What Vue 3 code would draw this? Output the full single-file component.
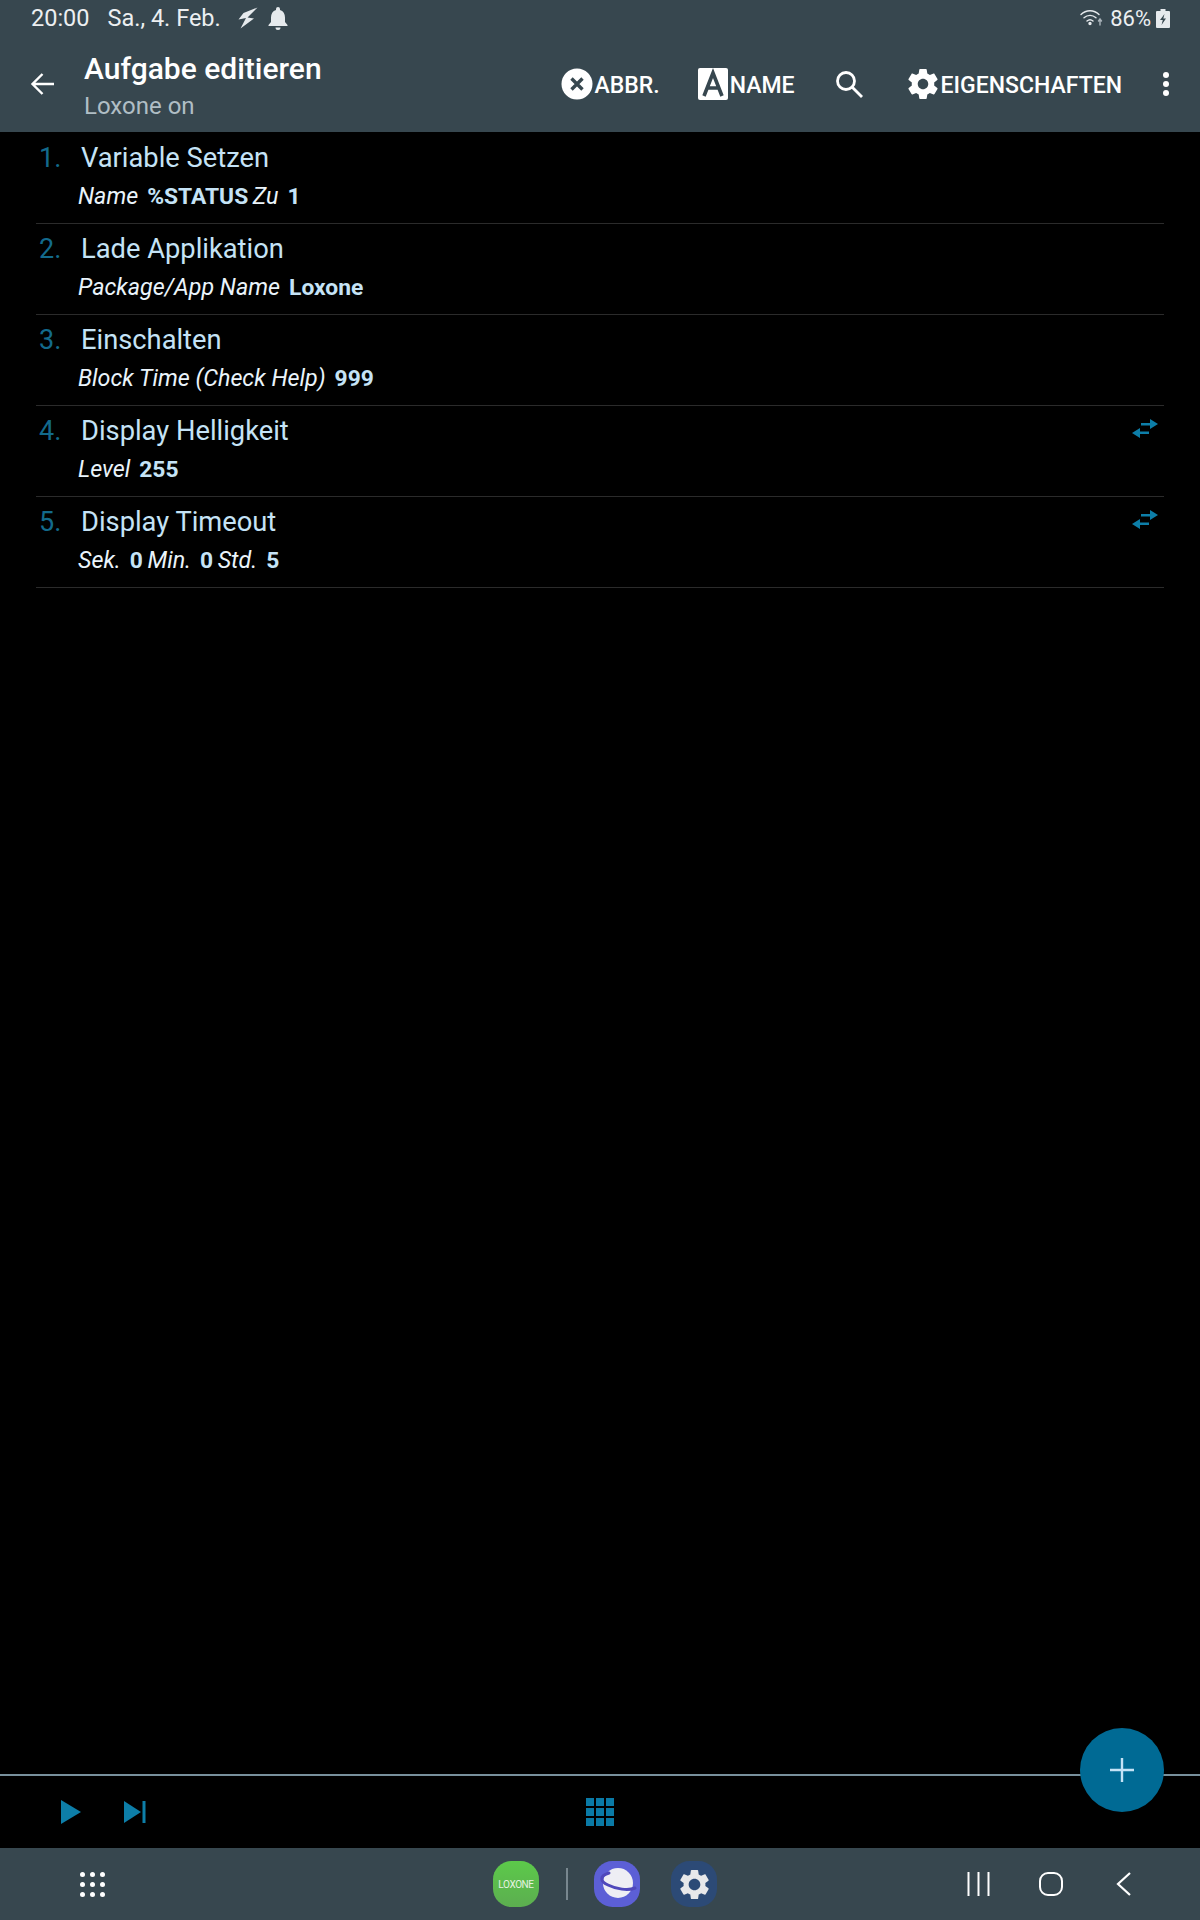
<template>
  <div class="screen">
    <div class="top">
      <div class="status">
        <span class="clock">20:00</span>
        <span class="date">Sa., 4. Feb.</span>
        <svg class="st-flash" width="20" height="22" viewBox="0 0 20 22"><path d="M19.500 .5 L5.500 6 L.5 12.500 L8 11 L2.500 21.500 L16 11.500 L9.500 10.500 Z" fill="#e6eaed"/></svg>
        <svg class="st-bell" width="20" height="24" viewBox="0 0 20 24"><path d="M10 1a2 2 0 0 1 2 2v1c3.4 1 5 4 5 7.500V16l2.500 3v1H.5v-1L3 16v-4.500C3 8 4.600 5 8 4V3a2 2 0 0 1 2-2zM7.500 21.500h5a2.500 2.500 0 0 1-5 0z" fill="#e6eaed"/></svg>
        <div class="status-right">
          <svg width="24" height="20" viewBox="0 0 24 20" fill="none" stroke="#e6eaed" stroke-width="1.400" stroke-linecap="round">
            <path d="M1 6.500C6 1.500 14 1.500 19 6.500"/>
            <path d="M4 9.800C7.500 6.500 12.500 6.500 16 9.800"/>
            <path d="M7 13C8.800 11.400 11.200 11.400 13 13"/>
            <circle cx="10" cy="15.500" r="1" fill="#e6eaed"/>
            <path d="M20 11v6M18.500 13l1.500-2 1.500 2" stroke="#a9b3ba"/>
          </svg>
          <span class="batt-text">86%</span>
          <svg width="14" height="19" viewBox="0 0 14 19"><path d="M4.500 0h5v2h3.500a1 1 0 0 1 1 1v15a1 1 0 0 1-1 1H1a1 1 0 0 1-1-1V3a1 1 0 0 1 1-1h3.500z" fill="#e6eaed"/><path d="M8.500 5 L4 11 L6.800 11 L5.500 16 L10 9.500 L7.300 9.500 Z" fill="#37474f"/></svg>
        </div>
      </div>
      <div class="toolbar">
        <svg class="back" width="24" height="24" viewBox="0 0 24 24" fill="none" stroke="#fff" stroke-width="2.400"><path d="M24 12H2.500M12.500 2 2.500 12l10 10"/></svg>
        <div class="titles">
          <div class="title">Aufgabe editieren</div>
          <div class="subtitle">Loxone on</div>
        </div>
        <div class="actions">
          <div class="act abbr">
            <svg width="32" height="32" viewBox="0 0 32 32"><circle cx="16" cy="16" r="15.500" fill="#fff"/><path d="M10.500 10.500l11 11M21.500 10.500l-11 11" stroke="#37474f" stroke-width="3.400"/></svg>
            <span>ABBR.</span>
          </div>
          <div class="act name">
            <svg width="30" height="32" viewBox="0 0 30 32"><rect width="30" height="32" rx="2" fill="#fff"/><path d="M6 28 15 5l9 23M9 20h12" fill="none" stroke="#37474f" stroke-width="3.600"/></svg>
            <span>NAME</span>
          </div>
          <svg class="search" width="28" height="28" viewBox="0 0 28 28" fill="none" stroke="#fff" stroke-width="2.800"><circle cx="11" cy="11" r="8.500"/><path d="M17 17l10 10"/></svg>
          <div class="act props">
            <svg class="gear" width="36" height="36" viewBox="0 0 24 24"><path fill="#fff" d="M19.430 12.980c.04-.32.07-.64.07-.98s-.03-.66-.07-.98l2.110-1.650c.19-.15.240-.42.120-.64l-2-3.460c-.12-.22-.39-.3-.61-.22l-2.490 1c-.52-.4-1.080-.73-1.690-.98l-.38-2.650C14.460 2.180 14.250 2 14 2h-4c-.25 0-.46.18-.49.420l-.38 2.650c-.61.25-1.170.59-1.690.98l-2.490-1c-.23-.09-.49 0-.61.220l-2 3.460c-.13.220-.07.490.12.640l2.110 1.650c-.04.32-.07.65-.07.980s.03.660.07.980l-2.110 1.650c-.19.150-.24.420-.12.640l2 3.460c.12.220.39.300.61.220l2.490-1c.52.400 1.080.730 1.690.980l.38 2.650c.03.240.24.420.49.420h4c.25 0 .46-.18.49-.42l.38-2.650c.61-.25 1.170-.59 1.690-.98l2.490 1c.23.090.49 0 .61-.22l2-3.460c.12-.22.07-.49-.12-.64l-2.110-1.650zM12 15.500c-1.930 0-3.500-1.570-3.500-3.500s1.570-3.500 3.500-3.500 3.500 1.570 3.500 3.500-1.570 3.500-3.500 3.500z"/></svg>
            <span>EIGENSCHAFTEN</span>
          </div>
          <svg class="more" width="8" height="26" viewBox="0 0 8 26" fill="#fff"><circle cx="4" cy="4" r="3"/><circle cx="4" cy="13" r="3"/><circle cx="4" cy="22" r="3"/></svg>
        </div>
      </div>
    </div>

    <div class="list">
      <div v-for="(item, i) in items" :key="item.title" class="row">
        <div class="row-head">
          <span class="num">{{ i + 1 }}.</span>
          <span class="row-title">{{ item.title }}</span>
          <svg v-if="item.swap" class="swap" width="26" height="19" viewBox="0 0 26 19" fill="#0d7ea8">
            <path d="M9 4h9V0l8 5-8 5V6.500H9z"/>
            <path d="M17 12.500H8V9l-8 5 8 5v-4h9z"/>
          </svg>
        </div>
        <div class="params">
          <template v-for="p in item.params" :key="p.label">
            <i>{{ p.label }}</i><b>{{ p.value }}</b>
          </template>
        </div>
      </div>
    </div>

    <div class="bottom">
      <svg width="20" height="24" viewBox="0 0 20 24" class="play"><path d="M0 0l20 12L0 24z" fill="#0d7ea8"/></svg>
      <svg width="22" height="22" viewBox="0 0 22 22" class="skip"><path d="M0 0l17 11L0 22z" fill="#0d7ea8"/><rect x="18.500" width="3" height="22" fill="#0d7ea8"/></svg>
      <div class="grid-icon"><span v-for="n in 9" :key="n"></span></div>
    </div>

    <div class="fab">
      <svg width="26" height="26" viewBox="0 0 26 26" stroke="#c5e3f6" stroke-width="2.400"><path d="M13 1v24M1 13h24"/></svg>
    </div>

    <div class="nav">
      <div class="apps-dots"><span v-for="n in 9" :key="n"></span></div>
      <div class="dock">
        <div class="squircle loxone"><span>LOXONE</span></div>
        <div class="dock-sep"></div>
        <div class="squircle planet">
          <svg width="46" height="46" viewBox="0 0 46 46">
            <circle cx="24" cy="22" r="15" fill="#eeeef4"/>
            <path d="M15 12C5 15 6 20 14 24 22 28 34 30 41 27" fill="none" stroke="#4f48bb" stroke-width="3" stroke-linecap="round"/>
          </svg>
        </div>
        <div class="squircle settings">
          <svg width="35" height="35" viewBox="0 0 24 24"><path fill="#e8e8ea" d="M19.430 12.980c.04-.32.07-.64.07-.98s-.03-.66-.07-.98l2.110-1.650c.19-.15.240-.42.120-.64l-2-3.460c-.12-.22-.39-.3-.61-.22l-2.490 1c-.52-.4-1.080-.73-1.690-.98l-.38-2.650C14.460 2.180 14.250 2 14 2h-4c-.25 0-.46.18-.49.420l-.38 2.650c-.61.25-1.170.59-1.690.98l-2.490-1c-.23-.09-.49 0-.61.220l-2 3.460c-.13.220-.07.490.12.640l2.110 1.650c-.04.32-.07.65-.07.980s.03.660.07.980l-2.110 1.650c-.19.150-.24.420-.12.640l2 3.460c.12.220.39.300.61.220l2.490-1c.52.400 1.080.730 1.690.980l.38 2.650c.03.240.24.420.49.420h4c.25 0 .46-.18.49-.42l.38-2.650c.61-.25 1.170-.59 1.690-.98l2.490 1c.23.090.49 0 .61-.22l2-3.460c.12-.22.07-.49-.12-.64l-2.110-1.650zM12 16c-2.200 0-4-1.800-4-4s1.800-4 4-4 4 1.800 4 4-1.800 4-4 4z"/></svg>
        </div>
      </div>
      <div class="sys-keys">
        <svg width="23" height="24" viewBox="0 0 23 24" stroke="#fff" stroke-width="2"><path d="M1.500 0v24M11.500 0v24M21.500 0v24"/></svg>
        <svg class="key-home" width="24" height="24" viewBox="0 0 24 24" fill="none" stroke="#fff" stroke-width="2"><rect x="1" y="1" width="22" height="22" rx="8"/></svg>
        <svg class="key-back" width="15" height="24" viewBox="0 0 15 24" fill="none" stroke="#fff" stroke-width="2.200"><path d="M14 1 2 12l12 11"/></svg>
      </div>
    </div>
  </div>
</template>

<script setup>
const items = [
  { title: 'Variable Setzen', params: [{ label: 'Name', value: '%STATUS' }, { label: 'Zu', value: '1' }] },
  { title: 'Lade Applikation', params: [{ label: 'Package/App Name', value: 'Loxone' }] },
  { title: 'Einschalten', params: [{ label: 'Block Time (Check Help)', value: '999' }] },
  { title: 'Display Helligkeit', swap: true, params: [{ label: 'Level', value: '255' }] },
  { title: 'Display Timeout', swap: true, params: [{ label: 'Sek.', value: '0' }, { label: 'Min.', value: '0' }, { label: 'Std.', value: '5' }] }
]
</script>

<style>
html, body { margin: 0; background: #000; }
</style>

<style scoped>
.screen { position: relative; width: 1200px; height: 1920px; background: #000; display: flex; flex-direction: column; font-family: Roboto, "Liberation Sans", sans-serif; overflow: hidden; }
.top { background: #37474f; height: 132px; flex: none; }
.status { height: 36px; display: flex; align-items: center; padding: 0 30px 0 31px; color: #eceff1; font-size: 23.500px; }
.date { margin-left: 18px; }
.st-flash { margin-left: 17px; }
.st-bell { margin-left: 10px; }
.status-right { margin-left: auto; display: flex; align-items: center; gap: 6px; }
.batt-text { font-size: 22px; margin-right: -1px; }
.toolbar { height: 96px; display: flex; align-items: center; padding: 0 30px; color: #fff; }
.back { flex: none; }
.titles { margin-left: 30px; margin-top: 3px; }
.title { font-size: 30px; font-weight: 500; line-height: 38px; }
.subtitle { font-size: 24px; line-height: 30px; margin-top: 3px; color: #b0bec5; }
.actions { margin-left: auto; display: flex; align-items: center; }
.act { display: flex; align-items: center; font-size: 23px; font-weight: 500; }
.act span { margin-top: 2px; }
.abbr { gap: 2px; }
.name { gap: 2px; margin-left: 38px; }
.search { margin-left: 40px; }
.props { gap: 3px; margin-left: 45px; }
.gear { margin: 0 -3px; }
.more { margin-left: 40px; }
.list { flex: 1; padding: 1px 36px 0; }
.row { height: 90px; border-bottom: 1px solid #2b2b2b; }
.row-head { display: flex; align-items: center; height: 50px; padding: 0 6px 0 3px; }
.num { width: 42px; font-size: 27px; color: #136a8c; }
.row-title { font-size: 27.300px; color: #c5e3f6; }
.swap { margin-left: auto; margin-top: -5px; }
.params { padding-left: 42px; font-size: 23.300px; line-height: 28px; margin-top: -1px; color: #eaf4fb; }
.params i { margin-right: 9px; }
.params b { margin-right: 4.500px; font-size: 22.800px; color: #c5e3f6; font-weight: 700; }
.bottom { height: 72px; flex: none; border-top: 2px solid #78909c; display: flex; align-items: center; position: relative; }
.play { margin-left: 61px; }
.skip { margin-left: 43px; }
.grid-icon { margin-left: 440px; display: grid; grid-template-columns: repeat(3, 8px); grid-auto-rows: 8px; gap: 2px; }
.grid-icon span { background: #0a7aa6; }
.fab { position: absolute; left: 1080px; top: 1728px; width: 84px; height: 84px; border-radius: 50%; background: #006a94; display: flex; align-items: center; justify-content: center; }
.nav { height: 72px; flex: none; background: #37474f; display: flex; align-items: center; padding: 0 69px 0 80px; }
.apps-dots { display: grid; grid-template-columns: repeat(3, 5px); grid-auto-rows: 5px; gap: 5px; }
.apps-dots span { background: #fff; border-radius: 50%; }
.dock { margin-left: 388px; display: flex; align-items: center; }
.squircle { width: 46px; height: 46px; border-radius: 40%; display: flex; align-items: center; justify-content: center; }
.loxone { background: linear-gradient(#5cc94a, #5cae50); color: #e6f2e2; font-size: 10px; letter-spacing: -0.4px; }
.dock-sep { width: 2px; height: 32px; margin: 0 26px 0 27px; background: #78878f; }
.planet { background: #5c5fd6; }
.settings { background: #2c4a76; margin-left: 31px; }
.sys-keys { margin-left: auto; display: flex; align-items: center; }
.key-home { margin-left: 49px; }
.key-back { margin-left: 53px; }
</style>
